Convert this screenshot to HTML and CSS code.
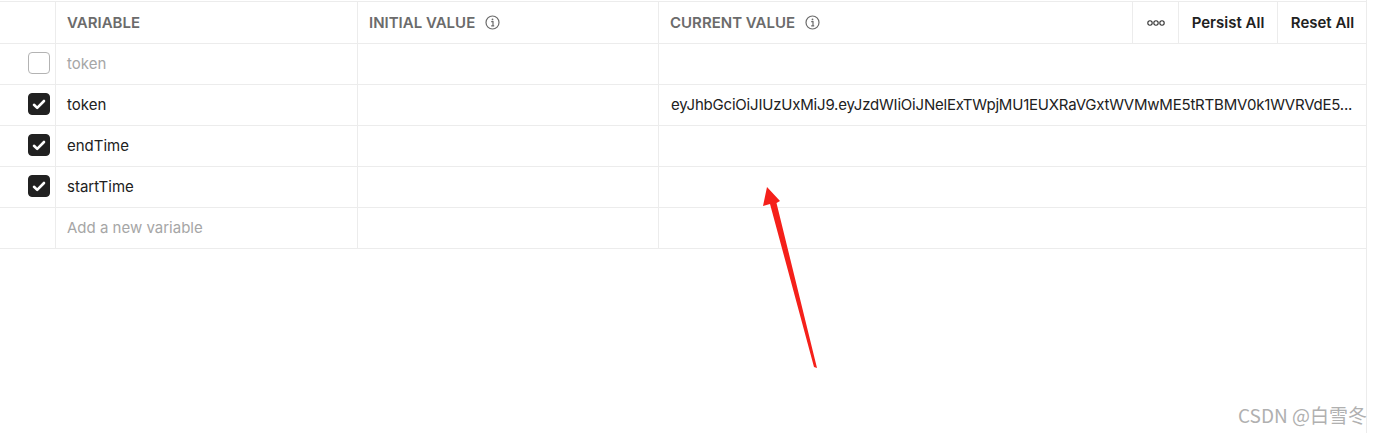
FILE: index.html
```html
<!DOCTYPE html>
<html>

<head>
    <title>Variables</title>
    <link rel="stylesheet" href="styles.css">
</head>

<body>
    <div class="page">
        <div class="vars-table">
            <!-- header -->
            <div class="cell head-cell"></div>
            <div class="cell head-cell label">VARIABLE</div>
            <div class="cell head-cell label">INITIAL VALUE
                <svg class="info" width="15" height="15" viewBox="0 0 15 15"><circle cx="7.5" cy="7.5" r="6.5" fill="none" stroke="#6b6b6b" stroke-width="1.2"/><circle cx="7.5" cy="4.4" r="0.9" fill="#6b6b6b"/><path d="M6.2 6.6h1.8v4.2M6.2 10.8h3" fill="none" stroke="#6b6b6b" stroke-width="1.2"/></svg>
            </div>
            <div class="cell head-cell label">CURRENT VALUE
                <svg class="info" width="15" height="15" viewBox="0 0 15 15"><circle cx="7.5" cy="7.5" r="6.5" fill="none" stroke="#6b6b6b" stroke-width="1.2"/><circle cx="7.5" cy="4.4" r="0.9" fill="#6b6b6b"/><path d="M6.2 6.6h1.8v4.2M6.2 10.8h3" fill="none" stroke="#6b6b6b" stroke-width="1.2"/></svg>
            </div>
            <div class="cell head-cell center">
                <svg width="18" height="6" viewBox="0 0 18 6"><circle cx="3" cy="3" r="2.2" fill="none" stroke="#333" stroke-width="1.1"/><circle cx="9" cy="3" r="2.2" fill="none" stroke="#333" stroke-width="1.1"/><circle cx="15" cy="3" r="2.2" fill="none" stroke="#333" stroke-width="1.1"/></svg>
            </div>
            <div class="cell head-cell center action">Persist All</div>
            <div class="cell head-cell center action last">Reset All</div>

            <!-- rows -->
            <div class="cell center"><span class="checkbox"></span></div>
            <div class="cell muted">token</div>
            <div class="cell"></div>
            <div class="cell value"></div>

            <div class="cell center"><span class="checkbox checked"><svg width="14" height="11" viewBox="0 0 14 11"><path d="M2 5.8l3.2 3.1L12 2" fill="none" stroke="#fff" stroke-width="2.6" stroke-linecap="round" stroke-linejoin="round"/></svg></span></div>
            <div class="cell">token</div>
            <div class="cell"></div>
            <div class="cell value"><span class="token">eyJhbGciOiJIUzUxMiJ9.eyJzdWIiOiJNelExTWpjMU1EUXRaVGxtWVMwME5tRTBMV0k1WVRVdE5...</span></div>

            <div class="cell center"><span class="checkbox checked"><svg width="14" height="11" viewBox="0 0 14 11"><path d="M2 5.8l3.2 3.1L12 2" fill="none" stroke="#fff" stroke-width="2.6" stroke-linecap="round" stroke-linejoin="round"/></svg></span></div>
            <div class="cell">endTime</div>
            <div class="cell"></div>
            <div class="cell value"></div>

            <div class="cell center"><span class="checkbox checked"><svg width="14" height="11" viewBox="0 0 14 11"><path d="M2 5.8l3.2 3.1L12 2" fill="none" stroke="#fff" stroke-width="2.6" stroke-linecap="round" stroke-linejoin="round"/></svg></span></div>
            <div class="cell">startTime</div>
            <div class="cell"></div>
            <div class="cell value"></div>

            <div class="cell"></div>
            <div class="cell muted">Add a new variable</div>
            <div class="cell"></div>
            <div class="cell value"></div>
        </div>
    </div>

    <svg class="arrow" width="1386" height="433" viewBox="0 0 1386 433">
        <polygon points="767,187 780,201 776.5,203 817,368 814,367 770,204 763,206" fill="#f5201a"/>
    </svg>
    <div class="watermark">CSDN @白雪冬</div>
</body>

</html>
```
FILE: styles.css
```css
body {
    margin: 0;
    background-color: #ffffff;
    font-family: Inter, "Liberation Sans", sans-serif;
    font-size: 15px;
    color: #212121;
}

.page {
    width: 1366px;
    height: 433px;
    border-right: 1px solid #ececec;
    padding-top: 1px;
    box-sizing: content-box;
}

.vars-table {
    display: grid;
    grid-template-columns: 56px 302px 301px 474px 46px 99px 89px;
    grid-auto-rows: 41px;
    grid-template-rows: 42px;
    border-top: 1px solid #ececec;
    width: 1367px;
}

.cell {
    display: flex;
    align-items: center;
    padding: 0 11px 2px 11px;
    border-right: 1px solid #ececec;
    border-bottom: 1px solid #ececec;
    box-sizing: border-box;
    min-width: 0;
}

.head-cell {
    padding-bottom: 0;
}

.cell.value {
    grid-column: span 4;
    padding: 0 6px 2px 12px;
    border-right: none;
}

.head-cell.last {
    border-right: none;
}

.label {
    font-weight: 600;
    color: #6b6b6b;
    gap: 10px;
}

.info {
    flex: none;
}

.center {
    justify-content: center;
    padding-left: 0;
    padding-right: 0;
}

.action {
    font-weight: 600;
    color: #212121;
}

.muted {
    color: #a6a6a6;
}

.checkbox {
    width: 22px;
    height: 22px;
    box-sizing: border-box;
    border: 1px solid #b3b3b3;
    border-radius: 4px;
    display: flex;
    align-items: center;
    justify-content: center;
    margin-left: 22px;
}

.checkbox.checked {
    background-color: #212121;
    border-color: #212121;
}

.token {
    white-space: nowrap;
    letter-spacing: -0.2px;
}

.arrow {
    position: absolute;
    top: 0;
    left: 0;
    pointer-events: none;
}

.watermark {
    position: absolute;
    left: 1238px;
    top: 401px;
    font-family: "Noto Sans CJK SC", "Liberation Sans", sans-serif;
    font-size: 19px;
    color: #b0b0b0;
}
```
